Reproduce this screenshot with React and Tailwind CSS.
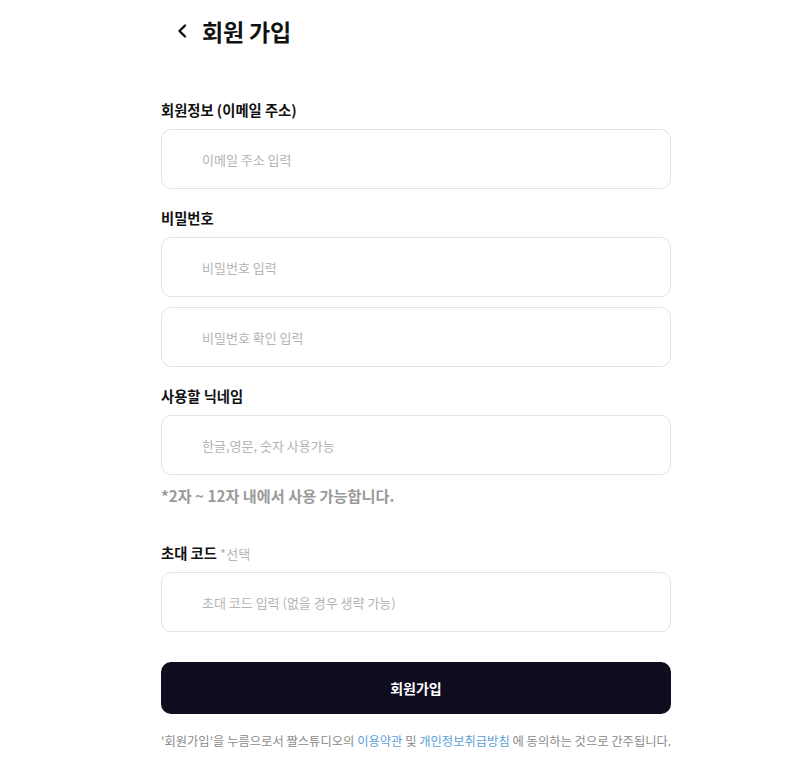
import { useState } from "react";

const font = { fontFamily: '"Noto Sans CJK KR", "Noto Sans", sans-serif' };

function Field({ placeholder, type = "text", className = "" }) {
  const [value, setValue] = useState("");
  return (
    <input
      type={type}
      value={value}
      onChange={(e) => setValue(e.target.value)}
      placeholder={placeholder}
      className={`block w-full h-[60px] rounded-[10px] border border-[#e3e3e3] bg-white pl-10 pr-4 text-[13px] text-[#222] placeholder:text-[#b4b4b4] outline-none ${className}`}
    />
  );
}

function Label({ children, className = "" }) {
  return (
    <p className={`h-5 leading-5 text-[14.3px] font-bold text-[#111] mb-[9px] ${className}`}>
      {children}
    </p>
  );
}

export default function App() {
  return (
    <div className="min-h-[781px] bg-white" style={font}>
      <div className="ml-[161px] w-[510px]">
        <div className="h-[62px] flex items-center pl-[15px] gap-[14px]">
          <button type="button" className="text-[#111]">
            <svg width="12" height="16" viewBox="0 0 12 16" fill="none">
              <path d="M9 2.5L3.5 8L9 13.5" stroke="currentColor" strokeWidth="2.4" strokeLinecap="round" strokeLinejoin="round" />
            </svg>
          </button>
          <h1 className="text-[23px] font-bold text-[#111] tracking-[-0.2px]">회원 가입</h1>
        </div>

        <Label className="mt-[38px]">회원정보 (이메일 주소)</Label>
        <Field placeholder="이메일 주소 입력" type="email" />

        <Label className="mt-[19px]">비밀번호</Label>
        <Field placeholder="비밀번호 입력" type="password" />
        <Field placeholder="비밀번호 확인 입력" type="password" className="mt-[10px]" />

        <Label className="mt-[19px]">사용할 닉네임</Label>
        <Field placeholder="한글,영문, 숫자 사용가능" />
        <p className="mt-[10px] h-5 leading-5 text-[15.2px] font-bold text-[#9a9a9a]">
          *2자 ~ 12자 내에서 사용 가능합니다.
        </p>

        <Label className="mt-[38px]">
          초대 코드 <span className="font-normal text-[13px] text-[#b4b4b4]">*선택</span>
        </Label>
        <Field placeholder="초대 코드 입력 (없을 경우 생략 가능)" />

        <button
          type="button"
          className="mt-[30px] w-full h-[52px] rounded-[10px] bg-[#100c1f] text-white text-[14px] font-bold"
        >
          회원가입
        </button>

        <p className="mt-[18px] leading-[18px] text-[12.3px] text-[#8a8a8a] whitespace-nowrap">
          '회원가입'을 누름으로서 짤스튜디오의{" "}
          <a href="#" className="text-[#5a9fd8]">이용약관</a> 및{" "}
          <a href="#" className="text-[#5a9fd8]">개인정보취급방침</a> 에 동의하는 것으로 간주됩니다.
        </p>
      </div>
    </div>
  );
}
